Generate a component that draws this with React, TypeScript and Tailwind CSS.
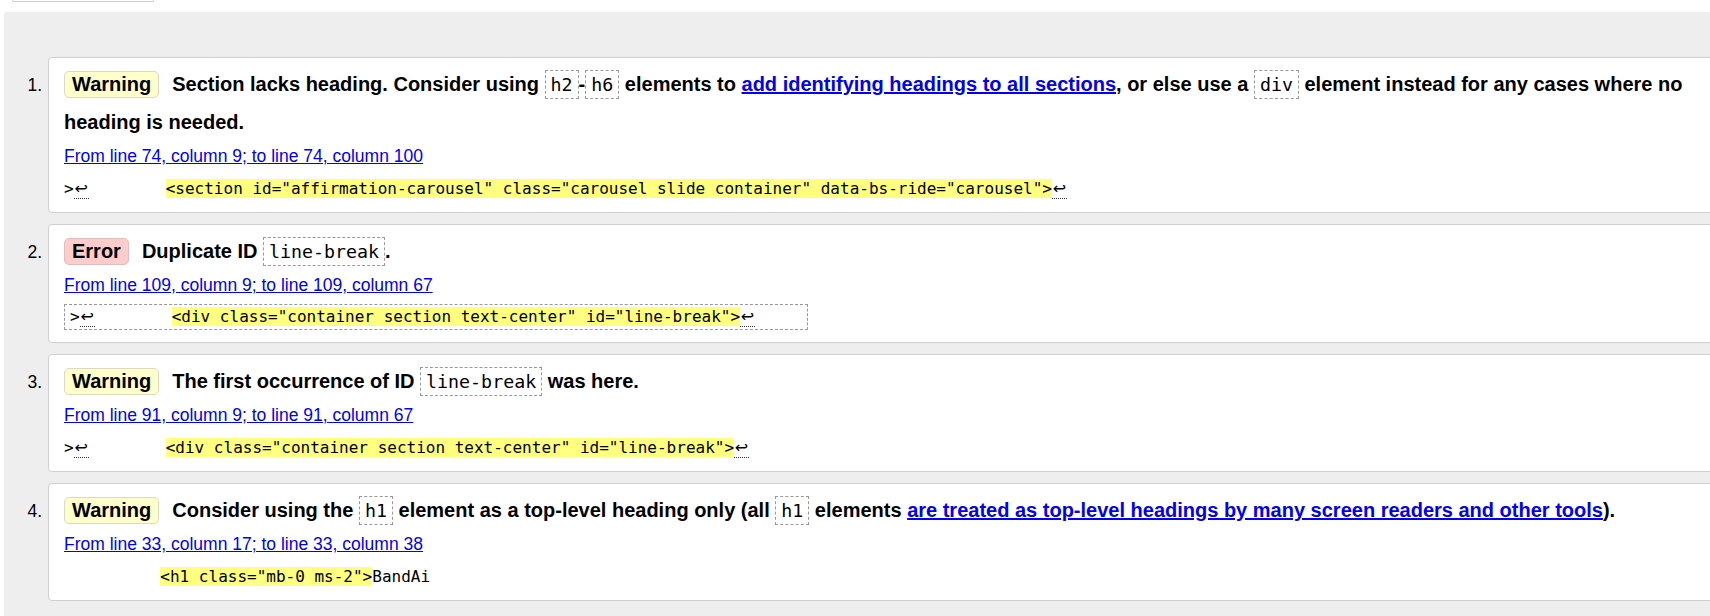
import { ReactNode } from 'react';

type Kind = 'Warning' | 'Error';

interface Issue {
  kind: Kind;
  message: ReactNode;
  location: string;
  lead: 'arrow' | 'spaces';
  code: string;
  tail: string;
  trailingArrow: boolean;
  boxed?: boolean;
}

// 메시지 안의 인라인 코드
const Code = ({ children }: { children: ReactNode }) => (
  <code className="border border-dashed border-[#999] px-[5px] py-[3px] font-['DejaVu_Sans_Mono',monospace] text-[18.3px] font-normal leading-[20px]">
    {children}
  </code>
);

const MsgLink = ({ children }: { children: ReactNode }) => (
  <a href="#" className="text-[#0000ee] underline">
    {children}
  </a>
);

// 줄바꿈 화살표 (점선 밑줄)
const Ret = () => (
  <span className="inline-block w-[15px] border-b border-dotted border-[#333] text-center font-['DejaVu_Sans',sans-serif] text-[16px] leading-[19px]">
    ↩
  </span>
);

const issues: Issue[] = [
  {
    kind: 'Warning',
    message: (
      <>
        Section lacks heading. Consider using <Code>h2</Code>-<Code>h6</Code> elements to{' '}
        <MsgLink>add identifying headings to all sections</MsgLink>, or else use a <Code>div</Code> element instead
        for any cases where no heading is needed.
      </>
    ),
    location: 'From line 74, column 9; to line 74, column 100',
    lead: 'arrow',
    code: '<section id="affirmation-carousel" class="carousel slide container" data-bs-ride="carousel">',
    tail: '',
    trailingArrow: true,
  },
  {
    kind: 'Error',
    message: (
      <>
        Duplicate ID <Code>line-break</Code>.
      </>
    ),
    location: 'From line 109, column 9; to line 109, column 67',
    lead: 'arrow',
    code: '<div class="container section text-center" id="line-break">',
    tail: '',
    trailingArrow: true,
    boxed: true,
  },
  {
    kind: 'Warning',
    message: (
      <>
        The first occurrence of ID <Code>line-break</Code> was here.
      </>
    ),
    location: 'From line 91, column 9; to line 91, column 67',
    lead: 'arrow',
    code: '<div class="container section text-center" id="line-break">',
    tail: '',
    trailingArrow: true,
  },
  {
    kind: 'Warning',
    message: (
      <>
        Consider using the <Code>h1</Code> element as a top-level heading only (all <Code>h1</Code> elements{' '}
        <MsgLink>are treated as top-level headings by many screen readers and other tools</MsgLink>).
      </>
    ),
    location: 'From line 33, column 17; to line 33, column 38',
    lead: 'spaces',
    code: '<h1 class="mb-0 ms-2">',
    tail: 'BandAi',
    trailingArrow: false,
  },
];

const Badge = ({ kind }: { kind: Kind }) => (
  <span
    className={
      kind === 'Error'
        ? 'mr-[13px] inline-block rounded-[5px] border border-[#dcc0c0] bg-[#ffcccc] px-[7px] leading-[25px]'
        : 'mr-[13px] inline-block rounded-[5px] border border-[#dadac0] bg-[#ffffcc] px-[7px] leading-[25px]'
    }
  >
    {kind}
  </span>
);

const Extract = ({ issue }: { issue: Issue }) => {
  const line = (
    <>
      {issue.lead === 'arrow' ? (
        <>
          {'>'}
          <Ret />
          {'        '}
        </>
      ) : (
        '          '
      )}
      <b className="bg-[#ffff80] font-normal">{issue.code}</b>
      {issue.tail}
      {issue.trailingArrow && <Ret />}
    </>
  );

  if (issue.boxed) {
    return (
      <div className="mt-[9px] h-[26px] w-[744px] whitespace-pre border border-dashed border-[#999] py-[2px] pl-[5px] font-['DejaVu_Sans_Mono',monospace] text-[16px] leading-[20px]">
        {line}
      </div>
    );
  }
  return (
    <div className="mt-[13px] h-[20px] whitespace-pre font-['DejaVu_Sans_Mono',monospace] text-[16px] leading-[20px]">
      {line}
    </div>
  );
};

const IssueCard = ({ issue, index }: { issue: Issue; index: number }) => (
  <li className="flex">
    <div className="mt-[8px] w-[44px] shrink-0 pr-[6px] pt-[1px] text-right text-[17.5px] leading-[38px]">
      {index + 1}.
    </div>
    <div
      className={
        issue.boxed
          ? 'flex-1 rounded-[4px] border border-[#d0d0d0] bg-white pb-[12px] pl-[15px] pr-[15px] pt-[7px]'
          : 'flex-1 rounded-[4px] border border-[#d0d0d0] bg-white pb-[13px] pl-[15px] pr-[15px] pt-[7px]'
      }
    >
      <p className="text-[20px] font-bold leading-[38px]">
        <Badge kind={issue.kind} />
        {issue.message}
      </p>
      <a href="#" className="mt-[5px] block h-[20px] text-[17.5px] leading-[20px] text-[#0000ee] underline">
        {issue.location}
      </a>
      <Extract issue={issue} />
    </div>
  </li>
);

export default function App() {
  return (
    <div className="min-h-screen overflow-hidden bg-white font-['Liberation_Sans',Arial,sans-serif] text-black">
      {/* 위쪽 입력창 끝부분 */}
      <div className="ml-[12px] h-[2px] w-[142px] rounded-b-[4px] border-x border-b border-[#ccc]" />

      <div className="ml-[4px] mt-[10px] min-h-[604px] w-[1760px] rounded-tl-[3px] bg-[#eeeeee] pb-[17px] pt-[45px]">
        <ol className="flex flex-col gap-[11px]">
          {issues.map((issue, i) => (
            <IssueCard key={i} issue={issue} index={i} />
          ))}
        </ol>
      </div>
    </div>
  );
}
